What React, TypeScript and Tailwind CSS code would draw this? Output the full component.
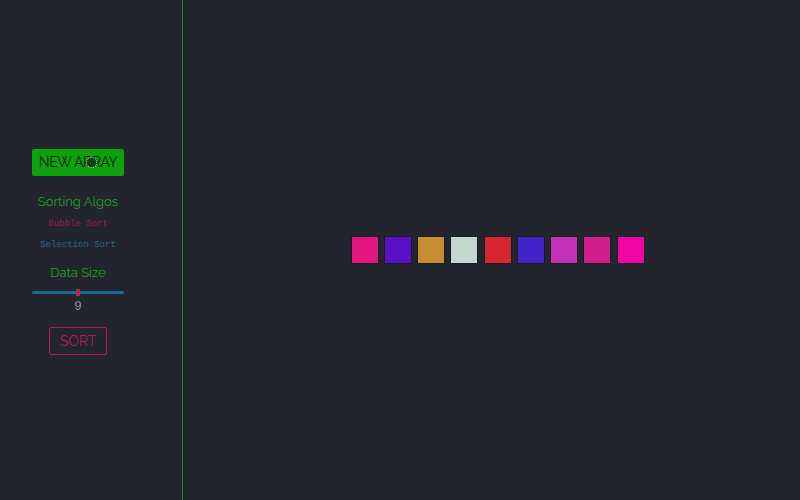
const bars = ["#e3157f", "#5a10c6", "#c58f31", "#c3d6cf", "#d7262e", "#4222c9", "#c233b9", "#d01f8c", "#f205a3"];

function App() {
  return (
    <div className="h-[500px] w-[800px] flex bg-[#22252d] overflow-hidden" style={{ fontFamily: "Raleway, Lato, 'Open Sans', sans-serif" }}>
      <aside className="w-[183px] h-full border-r border-[#1f8a1f] flex flex-col items-center justify-center pr-[26px] pt-[4px]">
        <div className="relative">
          <button className="w-[92px] h-[27px] bg-[#0da10d] rounded-[2px] text-[14px] text-[#0c1a0c] tracking-tight">
            NEW ARRAY
          </button>
          <span className="absolute left-[54px] top-[8px] w-[11px] h-[11px] rounded-full border border-dotted border-[#cfe8cf] bg-[#124012]" />
        </div>
        <div className="mt-[16px] text-[13px] text-[#1fa21f]">Sorting Algos</div>
        <div className="mt-[7px] text-[9px] text-[#9c1e44]" style={{ fontFamily: "'Liberation Mono', monospace" }}>Bubble Sort</div>
        <div className="mt-[7px] text-[9px] text-[#1b6a96]" style={{ fontFamily: "'Liberation Mono', monospace" }}>Selection Sort</div>
        <div className="mt-[11px] text-[13px] text-[#1fa21f]">Data Size</div>
        <div className="relative mt-[8px] w-[92px] h-[3px] rounded-full bg-[#1b6a96]">
          <span className="absolute left-[44px] top-[-2px] w-[4px] h-[7px] bg-[#c21f4a]" />
        </div>
        <div className="mt-[3px] text-[11px] text-[#b8bcc4]">9</div>
        <button className="mt-[14px] w-[58px] h-[28px] border border-[#b21d4f] rounded-[2px] text-[14px] text-[#b21d4f]">SORT</button>
      </aside>
      <main className="flex-1 flex items-center justify-center pl-[12px]">
        <div className="flex gap-[5.25px]">
          {bars.map((c, i) => (
            <div key={i} className="w-[28px] h-[28px] border border-[#1a1a22]" style={{ backgroundColor: c }} />
          ))}
        </div>
      </main>
    </div>
  );
}

export default App;
